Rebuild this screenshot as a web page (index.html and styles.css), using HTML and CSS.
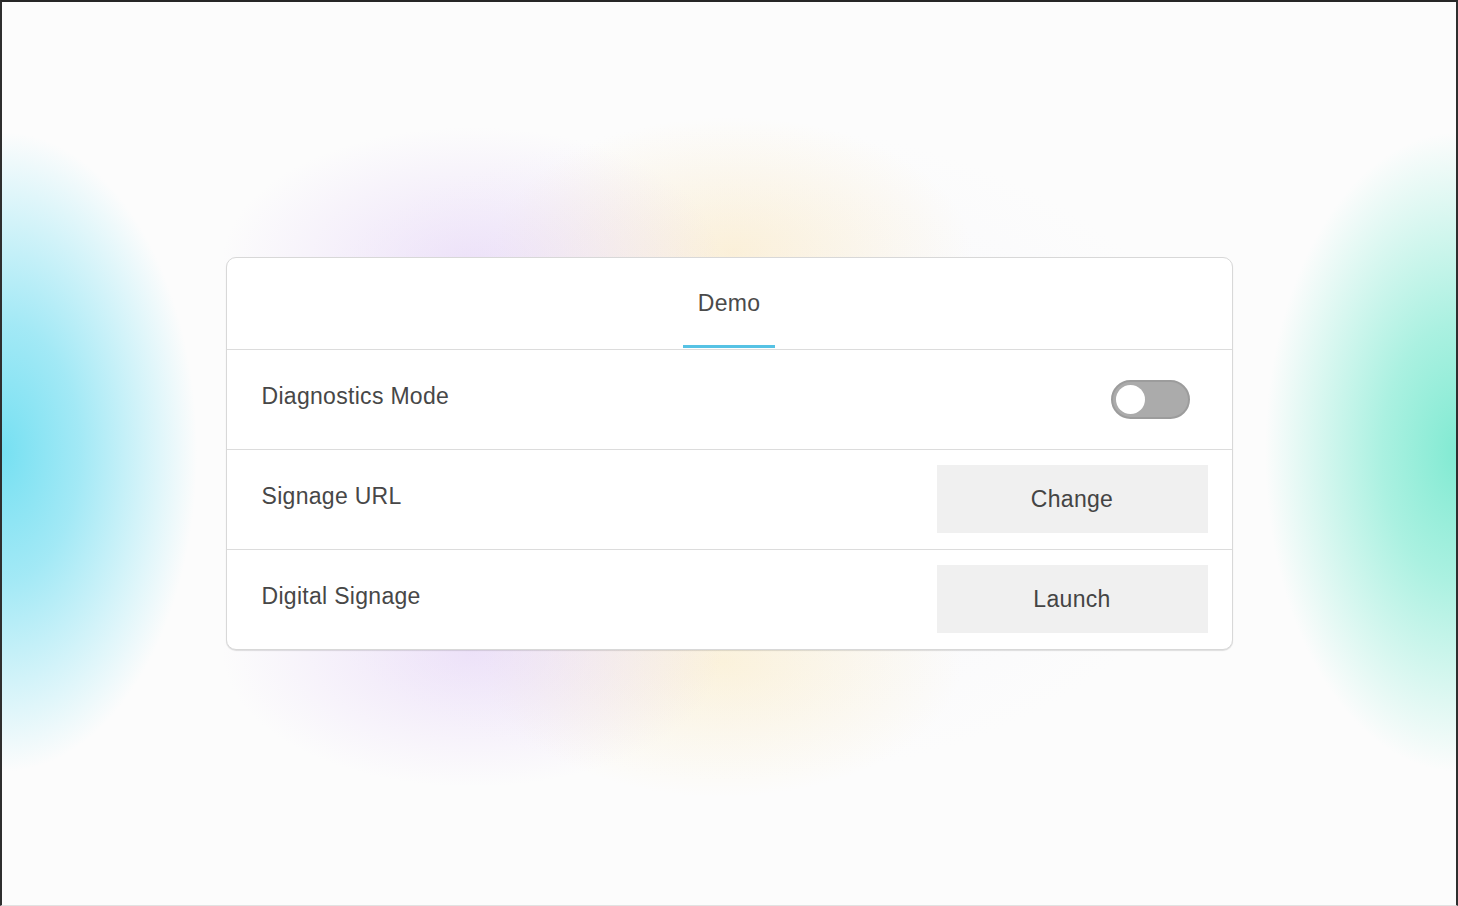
FILE: index.html
```html
<!DOCTYPE html>
<html>
<head>
<meta charset="utf-8">
<link rel="stylesheet" href="styles.css">
</head>
<body>
<div class="screen">
  <div class="card">
    <div class="card-head">
      <div class="tab">Demo</div>
    </div>
    <div class="row">
      <span class="label">Diagnostics Mode</span>
      <div class="toggle"><div class="knob"></div></div>
    </div>
    <div class="row">
      <span class="label">Signage URL</span>
      <button class="btn">Change</button>
    </div>
    <div class="row last">
      <span class="label">Digital Signage</span>
      <button class="btn">Launch</button>
    </div>
  </div>
</div>
</body>
</html>
```
FILE: styles.css
```css
html, body {
  margin: 0;
  padding: 0;
}
body {
  font-family: "Liberation Sans", Arial, sans-serif;
}
.screen {
  box-sizing: border-box;
  width: 1458px;
  height: 906px;
  border-top: 2px solid #262626;
  border-left: 2px solid #2e2e2e;
  border-right: 2px solid #2e2e2e;
  border-bottom: 1px solid #e2e2e2;
  display: flex;
  align-items: center;
  justify-content: center;
  background-color: #fcfcfc;
  background-image:
    radial-gradient(ellipse 195px 320px at 0px 450px, rgba(118, 224, 242, 1), rgba(140, 228, 244, 0.8) 40%, rgba(252, 252, 252, 0) 100%),
    radial-gradient(ellipse 195px 320px at 1458px 450px, rgba(128, 234, 210, 1), rgba(150, 238, 218, 0.8) 40%, rgba(252, 252, 252, 0) 100%),
    radial-gradient(ellipse 250px 135px at 470px 260px, rgba(220, 195, 245, 0.45), rgba(252, 252, 252, 0) 100%),
    radial-gradient(ellipse 250px 135px at 470px 650px, rgba(220, 195, 245, 0.45), rgba(252, 252, 252, 0) 100%),
    radial-gradient(ellipse 240px 135px at 730px 250px, rgba(252, 228, 175, 0.45), rgba(252, 252, 252, 0) 100%),
    radial-gradient(ellipse 240px 135px at 720px 660px, rgba(252, 232, 180, 0.45), rgba(252, 252, 252, 0) 100%),
    radial-gradient(ellipse 500px 330px at 729px 450px, rgba(240, 240, 250, 0.5), rgba(252, 252, 252, 0) 100%);
}
.card {
  box-sizing: border-box;
  width: 1007px;
  background: #ffffff;
  border: 1px solid #d8d8d8;
  border-radius: 10px;
  box-shadow: 0 1px 1px rgba(0, 0, 0, 0.12);
  overflow: hidden;
}
.card-head {
  height: 91px;
  border-bottom: 1px solid #dcdcdc;
  display: flex;
  justify-content: center;
  align-items: flex-end;
}
.tab {
  width: 92px;
  height: 88px;
  box-sizing: border-box;
  border-bottom: 3px solid #56c2e4;
  text-align: center;
  font-size: 23px;
  letter-spacing: 0.3px;
  line-height: 1;
  color: #4a4a4a;
  padding-top: 32px;
  margin-bottom: 1px;
}
.row {
  height: 99px;
  border-bottom: 1px solid #dcdcdc;
  display: flex;
  align-items: center;
  justify-content: space-between;
  padding: 0 24px 0 35px;
}
.row.last {
  border-bottom: none;
}
.label {
  font-size: 23px;
  letter-spacing: 0.3px;
  color: #474747;
  margin-top: -6px;
}
.toggle {
  box-sizing: border-box;
  width: 79px;
  height: 39px;
  border-radius: 20px;
  background: #ababab;
  border: 2px solid #9c9c9c;
  display: flex;
  align-items: center;
  padding-left: 3px;
  margin-right: 18px;
}
.knob {
  width: 29px;
  height: 29px;
  border-radius: 50%;
  background: #ffffff;
}
.btn {
  width: 271px;
  height: 68px;
  border: none;
  background: #f0f0f0;
  font-family: "Liberation Sans", Arial, sans-serif;
  font-size: 23px;
  letter-spacing: 0.3px;
  color: #444444;
  padding: 0;
  margin-top: -1px;
}
```
